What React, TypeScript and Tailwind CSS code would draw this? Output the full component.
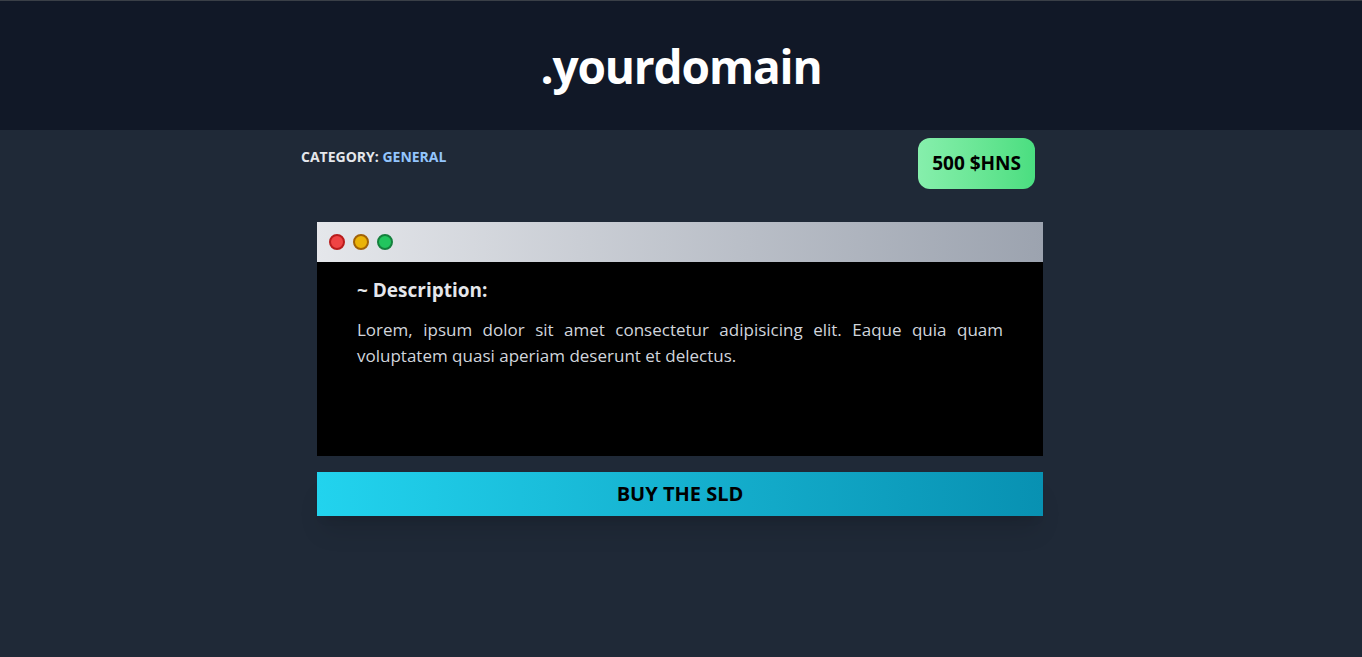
import React from "react";

const font = { fontFamily: '"Open Sans", "Noto Sans", sans-serif' };

function TrafficLights() {
  return (
    <div className="flex items-center gap-2 pl-3">
      <span className="w-4 h-4 rounded-full bg-[#ef4444] border-2 border-[#b91c1c]" />
      <span className="w-4 h-4 rounded-full bg-[#eab308] border-2 border-[#a16207]" />
      <span className="w-4 h-4 rounded-full bg-[#22c55e] border-2 border-[#15803d]" />
    </div>
  );
}

export default function App() {
  return (
    <div className="min-h-[657px] bg-[#1f2937] flex flex-col" style={font}>
      {/* Header */}
      <header className="h-[130px] bg-[#111827] border-t border-[#3a3f47] flex items-center justify-center">
        <h1 className="text-[46px] font-bold text-white tracking-tight mt-0.5">.yourdomain</h1>
      </header>

      <main className="w-[768px] mx-auto">
        {/* Category + price row */}
        <div className="flex justify-between items-start pl-1 pr-[30px] pt-2">
          <p className="text-sm font-bold uppercase text-gray-200 mt-[9px]">
            Category: <span className="text-[#93c5fd]">General</span>
          </p>
          <div className="h-[51px] px-[14px] rounded-xl bg-gradient-to-r from-[#86efac] to-[#4ade80] flex items-center text-[19px] font-bold text-black">
            500 $HNS
          </div>
        </div>

        {/* Window */}
        <div className="w-[726px] ml-5 mt-[33px]">
          <div className="h-10 flex items-center bg-gradient-to-r from-[#e5e7eb] to-[#9ca3af]">
            <TrafficLights />
          </div>
          <div className="h-[194px] bg-black px-10 pt-[14px]">
            <h2 className="text-[19px] font-bold text-gray-200">~ Description:</h2>
            <p className="mt-3 text-[17px] leading-[26px] text-gray-300 text-justify">
              Lorem, ipsum dolor sit amet consectetur adipisicing elit. Eaque quia quam voluptatem
              quasi aperiam deserunt et delectus.
            </p>
          </div>

          {/* Buy button */}
          <button className="mt-4 w-full h-11 bg-gradient-to-r from-[#22d3ee] to-[#0891b2] text-[20px] font-bold text-black shadow-xl">
            BUY THE SLD
          </button>
        </div>
      </main>
    </div>
  );
}
